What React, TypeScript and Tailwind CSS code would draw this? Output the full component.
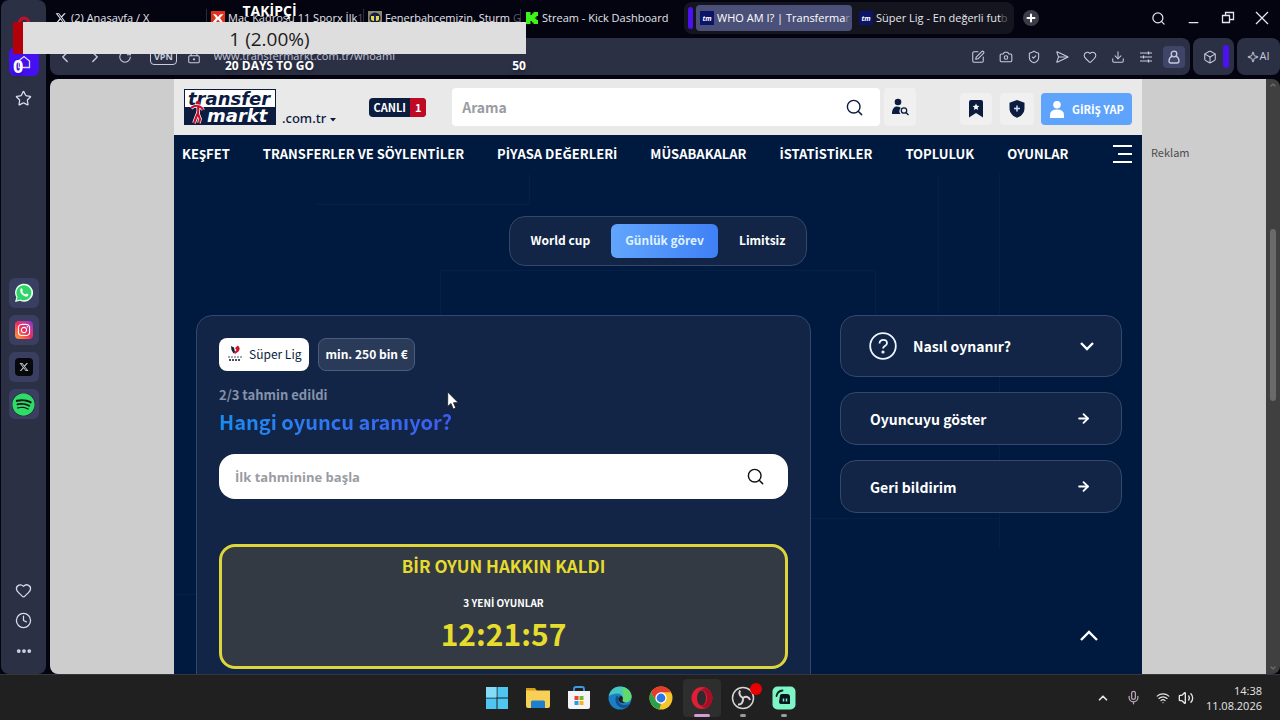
import React from 'react';
import {
  ArrowRight,
  Box,
  Camera,
  ChevronDown,
  ChevronLeft,
  ChevronRight,
  ChevronUp,
  Clock4,
  Download,
  Ellipsis,
  Heart,
  LockKeyhole,
  Mic,
  Minus,
  Plus,
  RotateCw,
  Search,
  SendHorizontal,
  ShieldCheck,
  Sparkle,
  SquarePen,
  Star,
  Volume2,
  Wifi,
} from 'lucide-react';
import { FaInstagram, FaSpotify, FaXTwitter } from 'react-icons/fa6';

const navItems = [
  'KEŞFET',
  'TRANSFERLER VE SÖYLENTİLER',
  'PİYASA DEĞERLERİ',
  'MÜSABAKALAR',
  'İSTATİSTİKLER',
  'TOPLULUK',
  'OYUNLAR',
];

// The site font has no dotted capital I, so that letter gets its own font
const TurkishText: React.FC<{ children: string }> = ({ children }) => (
  <>
    {children.split(/(İ)/).map((part, i) =>
      part === 'İ' ? <span key={i} className="font-['Open_Sans']">{part}</span> : part
    )}
  </>
);

const TmFavicon = () => (
  <span className="flex h-[14px] w-[14px] shrink-0 items-center justify-center overflow-hidden bg-[#0b1466] text-[7px] leading-none font-bold italic text-white">
    tm
  </span>
);

const SporxFavicon = () => (
  <svg viewBox="0 0 14 14" className="h-[14px] w-[14px] shrink-0">
    <rect width="14" height="14" fill="#e0301e" />
    <path d="M2 3l3 .5L7 6l2-2.500 3.500-.5L9 7l3 4.500-3-.5-2-2.500L5 11l-3.500.5L5 7z" fill="#fff" />
  </svg>
);

const FenerFavicon = () => (
  <svg viewBox="0 0 14 14" className="h-[14px] w-[14px] shrink-0">
    <rect width="14" height="14" fill="#8b8672" />
    <circle cx="7" cy="7" r="5.500" fill="#151c3d" />
    <path d="M3 5h8v3.500c-1 2-7 2-8 0z" fill="#e7d84a" />
    <path d="M6 4h2v6H6z" fill="#1a2a66" />
  </svg>
);

const KickFavicon = () => (
  <svg viewBox="0 0 12 12" className="mx-px h-3 w-3 shrink-0">
    <path d="M0 0h4.500v3H6V1.500h1.500V0H12v4h-1.500v1.500H9v1h1.500V8H12v4H7.500v-1.500H6V9H4.500v3H0z" fill="#3ef51a" />
  </svg>
);

interface TabProps {
  icon: React.ReactNode;
  title: string;
  fade?: string;
  divider?: boolean;
}

const BrowserTab: React.FC<TabProps> = ({ icon, title, fade, divider }) => (
  <button
    className={`flex h-[18px] w-[157px] items-center gap-[3px] border-r pl-1 text-left ${divider ? 'border-[#2a2c3c]' : 'border-transparent'}`}
  >
    {icon}
    <span className="whitespace-nowrap">
      {title}
      <span className="text-[#5a5c6c]">{fade}</span>
    </span>
  </button>
);

const TabBar = () => (
  <div className="flex h-[36px] items-center text-[11px] text-[#e4e5ee]">
    <BrowserTab icon={<FaXTwitter className="mx-px h-3 w-3 shrink-0" />} title="(2) Anasayfa / X" divider />
    <BrowserTab icon={<SporxFavicon />} title="Maç Kadrosu 11 Sporx İlk" fade="1" divider />
    <BrowserTab icon={<FenerFavicon />} title="Fenerbahçemizin, Sturm" fade=" G" divider />
    <BrowserTab icon={<KickFavicon />} title="Stream - Kick Dashboard" />
    <div className="ml-1.5 flex h-8 w-[330px] items-center gap-[3px] rounded-lg bg-[#14151f] px-1">
      <span className="h-[22px] w-[5px] shrink-0 rounded-sm bg-[#4a12f0]" />
      <button className="flex h-[26px] w-[156px] shrink-0 items-center gap-[3px] rounded bg-[#4b5079] px-1 text-left text-white">
        <TmFavicon />
        <span className="whitespace-nowrap">
          WHO AM I? | Transferma<span className="text-[#8c90b0]">r</span>
        </span>
      </button>
      <button className="flex h-[26px] min-w-0 flex-1 items-center gap-[3px] px-1 text-left">
        <TmFavicon />
        <span className="whitespace-nowrap">
          Süper Lig - En değerli fut<span className="text-[#5a5c6c]">b</span>
        </span>
      </button>
    </div>
    <button aria-label="Yeni sekme" className="ml-[9px] flex h-4 w-4 items-center justify-center rounded-full bg-[#3b3c48] text-white">
      <Plus className="h-3 w-3" strokeWidth={4} />
    </button>
    <div className="ml-auto flex items-center gap-5 pr-[11px]">
      <button aria-label="Sekme ara"><Search className="h-[15px] w-[15px]" /></button>
      <button aria-label="Küçült"><Minus className="mt-2 h-[15px] w-[15px]" strokeWidth={2} /></button>
      <button aria-label="Geri yükle">
        <svg viewBox="0 0 14 14" className="h-[14px] w-[14px]" fill="none" stroke="currentColor" strokeWidth="1.300">
          <path d="M1.500 4.500h7v7h-7z" />
          <path d="M4.500 4.500v-3h8v7h-4" />
        </svg>
      </button>
      <button aria-label="Kapat">
        <svg viewBox="0 0 14 14" className="h-[14px] w-[14px]" fill="none" stroke="currentColor" strokeWidth="1.300">
          <path d="M1 1l12 12M13 1L1 13" />
        </svg>
      </button>
    </div>
  </div>
);

const AddressBar = () => (
  <div className="mt-[2px] flex h-[37px] gap-[3px] text-[#c9ccdc]">
    <div className="flex min-w-0 flex-1 items-center rounded-lg bg-[#2c3045] pr-[5px] pl-[6px]">
      <div className="flex items-center">
        <button aria-label="Geri" className="w-[30px]"><ChevronLeft className="h-[18px] w-[18px]" strokeWidth={1.8} /></button>
        <button aria-label="İleri" className="w-[32px]"><ChevronRight className="h-[18px] w-[18px]" strokeWidth={1.8} /></button>
        <button aria-label="Yenile" className="w-8"><RotateCw className="h-[14px] w-[14px]" strokeWidth={1.8} /></button>
        <span className="mr-[10px] rounded-sm border border-[#c9ccdc] px-[3px] text-[9px] leading-[14px] font-bold">VPN</span>
        <LockKeyhole className="h-[14px] w-[14px]" strokeWidth={1.8} />
      </div>
      <label htmlFor="address" className="sr-only">Adres</label>
      <input
        id="address"
        readOnly
        value="www.transfermarkt.com.tr/whoami"
        className="ml-[13px] min-w-0 flex-1 bg-transparent text-[11px] text-[#c3c6d6] outline-none"
      />
      <div className="flex items-center gap-[14px]">
        <SquarePen className="h-[14px] w-[14px]" strokeWidth={1.8} />
        <Camera className="h-[14px] w-[14px]" strokeWidth={1.8} />
        <ShieldCheck className="h-[14px] w-[14px]" strokeWidth={1.8} />
        <SendHorizontal className="h-[14px] w-[14px]" strokeWidth={1.8} />
        <Heart className="h-[14px] w-[14px]" strokeWidth={1.8} />
        <Download className="h-[14px] w-[14px]" strokeWidth={1.8} />
        <svg viewBox="0 0 14 14" className="h-[14px] w-[14px]" fill="none" stroke="currentColor" strokeWidth="1.200">
          <path d="M1 3h12M1 7h12M1 11h12M9.500 1.500v3M4.500 5.500v3M9.500 9.500v3" />
        </svg>
      </div>
      <button aria-label="Profil" className="ml-[10px] flex h-[22px] w-[22px] items-center justify-center rounded bg-[#3f4568]">
        <svg viewBox="0 0 14 14" className="h-[14px] w-[14px]" fill="none" stroke="currentColor" strokeWidth="1.300">
          <circle cx="7" cy="4" r="2.800" />
          <path d="M5 6.200C2.500 7.500 2 9 2 11q0 2 2 2h6q2 0 2-2c0-2-.5-3.500-3-4.800" />
        </svg>
      </button>
    </div>
    <div className="flex w-[41px] items-center justify-end gap-[6px] rounded-lg bg-[#2c3045] pr-[5px]">
      <Box className="h-[14px] w-[14px]" strokeWidth={1.8} />
      <span className="h-[23px] w-[6px] rounded-sm bg-[#4a12f0]" />
    </div>
    <button className="flex w-[43px] items-center justify-center rounded-lg bg-[#2c3045] text-[11px]">
      <Sparkle className="h-3 w-3" strokeWidth={2} />
      AI
    </button>
  </div>
);

const tile = 'flex h-[30px] w-[30px] items-center justify-center rounded-md bg-[#3a3e60]';

const Sidebar = () => (
  <aside className="ml-px flex w-[45px] shrink-0 flex-col items-center rounded-lg bg-[#2c3045] text-[#d9dcec]">
    <div className="flex h-[47px] items-center">
      <svg viewBox="0 0 16 16" className="h-4 w-4" fill="none" stroke="#c0102c" strokeWidth="3">
        <ellipse cx="8" cy="8" rx="5" ry="6" />
      </svg>
    </div>
    <button aria-label="Çalışma alanı" className="flex h-[29px] w-[30px] items-center justify-center rounded-md bg-[#4310f2]">
      <svg viewBox="0 0 14 14" className="h-[14px] w-[14px]" fill="none" stroke="currentColor" strokeWidth="1.300">
        <path d="M1.500 6L7 1.500 12.500 6v6.500h-11z" />
      </svg>
    </button>
    <Star className="mt-[14px] h-[17px] w-[17px]" strokeWidth={1.8} />
    <div className="mt-[171px] flex flex-col gap-[7px]">
      <button aria-label="WhatsApp" className={tile}>
        <svg viewBox="0 0 20 20" className="h-5 w-5">
          <path d="M1 19l1.300-4.800A9 9 0 1 1 6 17.700z" fill="#e9fff0" />
          <path d="M2.700 17.300l.9-3.400A7.500 7.500 0 1 1 6.300 16.400z" fill="#2fd566" />
          <path d="M6.700 5.500c.6-.6 1.200-.4 1.500.3l.6 1.400c.2.600-.7 1-.5 1.500.6 1.200 1.600 2.100 2.900 2.600.5.100.8-.8 1.300-.8l1.600.8c.6.300.3 1.300-.2 1.800-2.700 2.200-9.500-3.300-7.200-7.600z" fill="#fff" />
        </svg>
      </button>
      <button aria-label="Instagram" className={tile}>
        <span className="flex h-[18px] w-[18px] items-center justify-center rounded bg-linear-to-tr from-[#ff9d1f] via-[#f0245c] to-[#8a22d6] text-white">
          <FaInstagram className="h-[14px] w-[14px]" />
        </span>
      </button>
      <button aria-label="X" className={tile}>
        <span className="flex h-[18px] w-[18px] items-center justify-center rounded bg-[#07080c] text-[#cfd0d6]">
          <FaXTwitter className="h-[10px] w-[10px]" />
        </span>
      </button>
      <button aria-label="Spotify" className={tile}>
        <span className="rounded-full bg-[#101815]"><FaSpotify className="h-[23px] w-[23px] text-[#2fdb69]" /></span>
      </button>
    </div>
    <div className="mt-auto flex flex-col items-center gap-[13px] pb-[14px]">
      <Heart className="h-[17px] w-[17px]" strokeWidth={1.8} />
      <Clock4 className="h-[17px] w-[17px]" strokeWidth={1.8} />
      <Ellipsis className="h-[18px] w-[18px]" strokeWidth={3} />
    </div>
  </aside>
);

const SiteLogo = () => (
  <a href="#" className="relative block h-[36px] w-[92px] border border-[#0b1c3f] bg-white font-['DejaVu_Sans'] text-[18px] leading-[17px] font-bold italic">
    <span className="block h-[17px] pl-[3px] text-[#0b1c3f]">transfer</span>
    <span className="block h-[17px] bg-[#0b1c3f] pl-[22px] text-white">markt</span>
    <svg viewBox="0 0 16 24" className="absolute bottom-0 left-1 h-6 w-4" fill="none" stroke="#c8102e" strokeWidth="2.200">
      <circle cx="9" cy="3" r="1.200" />
      <path d="M2 8q4-3 7-2 4 1 5 4M9 6q1 6-1 9l-3 8M9 14l2 5-1 4" stroke="#fff" strokeWidth="3.600" />
      <path d="M2 8q4-3 7-2 4 1 5 4M9 6q1 6-1 9l-3 8M9 14l2 5-1 4" />
    </svg>
  </a>
);

const SiteHeader = () => (
  <header className="flex h-14 shrink-0 items-center bg-[#e9e9e9] px-[10px]">
    <SiteLogo />
    <button className="mt-[22px] ml-[6px] flex items-center gap-1 font-['Noto_Sans'] text-[13px] leading-4 font-medium text-[#0b1c3f]">
      .com.tr
      <svg viewBox="0 0 6 4" className="mt-1 h-1 w-[6px]"><path d="M0 0h6L3 3.500z" fill="#0b1c3f" /></svg>
    </button>
    <a href="#" className="ml-[33px] flex h-[19px] overflow-hidden rounded-sm bg-[#0b1c3f] text-[11px] leading-[18px] font-bold text-white">
      <span className="w-[41px] text-center">CANLI</span>
      <span className="w-4 bg-[#bf0a24] text-center">1</span>
    </a>
    <form className="ml-[26px] flex h-[38px] min-w-0 flex-1 items-center rounded bg-white pr-4 pl-[10px]">
      <label htmlFor="site-search" className="sr-only">Arama</label>
      <input
        id="site-search"
        placeholder="Arama"
        className="min-w-0 flex-1 text-[14px] leading-5 font-bold outline-none placeholder:text-[#9a9ca3]"
      />
      <Search className="h-[19px] w-[19px] text-[#0b1c3f]" strokeWidth={1.8} />
    </form>
    <button aria-label="Detaylı arama" className="ml-1 flex h-[38px] w-8 items-center justify-center rounded bg-[#f0f0f1]">
      <svg viewBox="0 0 18 18" className="h-[18px] w-[18px]" fill="#0b1c3f">
        <circle cx="7" cy="4" r="3.300" />
        <path d="M1 16c0-5 2-7.500 5-7.500q3 0 3.800 1.500A4.500 4.500 0 0 0 9.500 16z" />
        <circle cx="13" cy="12.500" r="2.700" fill="none" stroke="#0b1c3f" strokeWidth="1.300" />
        <path d="M15 14.500l2.500 2.500" stroke="#0b1c3f" strokeWidth="1.400" />
      </svg>
    </button>
    <button aria-label="İzleme listesi" className="mt-1 ml-11 flex h-8 w-8 items-center justify-center rounded bg-[#f0f0f1]">
      <svg viewBox="0 0 14 18" className="h-[18px] w-[14px]" fill="#0b1c3f">
        <path d="M0 2q0-2 2-2h10q2 0 2 2v15.500L7 13l-7 4.500z" />
        <path d="M7 3.500l1 2.200 2.400.3-1.800 1.600.5 2.400L7 8.800 4.900 10l.5-2.400L3.600 6 6 5.700z" fill="#fff" />
      </svg>
    </button>
    <button aria-label="Koruma" className="mt-1 ml-2 flex h-8 w-[34px] items-center justify-center rounded bg-[#f0f0f1]">
      <svg viewBox="0 0 16 18" className="h-[18px] w-4" fill="#0b1c3f">
        <path d="M8 0l7.500 2.700V8c0 5-3 8-7.500 9.700C3.500 16 .5 13 .5 8V2.700z" />
        <path d="M8 5.500v6M5 8.500h6" stroke="#cfe0ff" strokeWidth="1.500" />
      </svg>
    </button>
    <button className="mt-1 ml-[7px] flex h-8 w-[91px] items-center gap-2 rounded bg-[#5ea4fc] pl-[9px] text-[11px] leading-4 font-bold whitespace-nowrap text-white">
      <svg viewBox="0 0 14 17" className="h-[17px] w-[14px]" fill="#fff">
        <circle cx="7" cy="3.800" r="3.800" />
        <path d="M0 17v-3q0-5.500 7-5.500t7 5.500v3z" />
      </svg>
      <span><TurkishText>GİRİŞ YAP</TurkishText></span>
    </button>
  </header>
);

const glass = 'border border-[#33486b] bg-[#122546]';

// Hairlines behind the game, barely lighter than the page
const BackgroundLines = () => (
  <svg viewBox="0 0 968 595" className="absolute top-0 left-0 w-full" fill="none" stroke="#061f45" strokeWidth="1">
    <path d="M355.500 95v30M142 125.500h214M266.500 192v48M266 191.500h436M701.500 192v48M764.500 95v140M825.500 95v375M540 439.500h285M0 515.500h40" />
  </svg>
);

const ModeTabs = () => (
  <div className={`relative mx-auto mt-11 flex w-fit gap-[7px] rounded-2xl p-[7px] text-[12px] leading-4 font-bold ${glass}`}>
    <button className="h-[34px] px-[14px] pb-[2px]">World cup</button>
    <button className="h-[34px] rounded-md bg-linear-to-r from-[#62a5fc] to-[#3f80f6] px-[14px] pb-[2px] text-[#dff3ff]">Günlük görev</button>
    <button className="h-[34px] px-[14px] pb-[2px]">Limitsiz</button>
  </div>
);

const GameCard = () => (
  <section className={`min-w-0 flex-1 rounded-2xl px-[22px] pt-[22px] pb-10 ${glass}`}>
    <div className="flex gap-[9px]">
      <span className="flex h-[33px] items-center gap-[6px] rounded-lg bg-white px-2 pb-[2px] text-[12px] text-[#0b1c3f]">
        <svg viewBox="0 0 16 18" className="h-[18px] w-4">
          <path d="M4 1l3 1.500L8 7 6.500 8.500 4.500 5z" fill="#1a1f38" />
          <path d="M11 .5q3 3 .5 6L8 9 7 7.500 9.500 5 8 3z" fill="#d0142c" />
          <path d="M1 12h14" stroke="#8a8a92" strokeWidth="1.500" strokeDasharray="2 1" />
          <path d="M2 15h12" stroke="#4a4d5e" strokeWidth="2" strokeDasharray="2 1" />
        </svg>
        Süper Lig
      </span>
      <span className="flex h-[33px] items-center rounded-lg border border-[#4b5d7c] bg-[#2a3b5a] px-[6px] pb-[2px] text-[12px] font-bold">min. 250 bin €</span>
    </div>
    <p className="mt-[14px] text-[13px] leading-5 font-bold text-[#8592ac]">2/3 tahmin edildi</p>
    <h1 className="mt-[3px] w-fit bg-linear-to-r from-[#1a8cf0] to-[#3c5cf0] bg-clip-text text-[20px] leading-7 font-bold text-transparent">
      Hangi oyuncu aranıyor?
    </h1>
    <form className="mt-[18px] flex h-[45px] items-center rounded-2xl bg-white pr-[23px] pl-4">
      <label htmlFor="guess" className="sr-only">İlk tahminine başla</label>
      <input
        id="guess"
        placeholder="İlk tahminine başla"
        className="min-w-0 flex-1 font-['Open_Sans'] text-[13px] leading-5 font-bold outline-none placeholder:text-[#9a9ca3]"
      />
      <Search className="h-[19px] w-[19px] text-[#111]" strokeWidth={1.8} />
    </form>
    <div className="mt-[45px] flex h-[125px] flex-col items-center rounded-2xl border-[3px] border-[#dcd63c] bg-[#333a44] pt-[7px] font-bold text-[#e6dc2e]">
      <p className="text-[17px] leading-6"><TurkishText>BİR OYUN HAKKIN KALDI</TurkishText></p>
      <p className="mt-4 text-[10px] leading-4 text-white"><TurkishText>3 YENİ OYUNLAR</TurkishText></p>
      <p className="mt-[2px] text-[30px] leading-10">12:21:57</p>
    </div>
  </section>
);

const SideActions = () => (
  <div className="flex w-[282px] shrink-0 flex-col gap-[15px] text-[14px] leading-5 font-bold">
    <button className={`flex h-[62px] items-center rounded-2xl pr-[27px] pl-7 ${glass}`}>
      <svg viewBox="0 0 28 28" className="mr-4 h-7 w-7" fill="none" stroke="#eef6ff" strokeWidth="1.800">
        <circle cx="14" cy="14" r="12.800" />
        <path d="M10.500 11.500c0-5 7.500-4.500 7.500-.3 0 2.800-4 2.800-4 5.300" />
        <circle cx="14" cy="20" r=".7" fill="#eef6ff" />
      </svg>
      Nasıl oynanır?
      <svg viewBox="0 0 14 14" className="ml-auto h-[14px] w-[14px]" fill="none" stroke="#fff" strokeWidth="2.400">
        <path d="M1 4l6 6 6-6" />
      </svg>
    </button>
    <button className={`flex h-[53px] items-center justify-between rounded-2xl pr-[30px] pl-[29px] ${glass}`}>
      Oyuncuyu göster
      <ArrowRight className="h-[15px] w-[15px]" strokeWidth={3} />
    </button>
    <button className={`flex h-[53px] items-center justify-between rounded-2xl pr-[30px] pl-[29px] ${glass}`}>
      Geri bildirim
      <ArrowRight className="h-[15px] w-[15px]" strokeWidth={3} />
    </button>
  </div>
);

const Site = () => (
  <div className="relative flex min-w-0 flex-col overflow-hidden bg-[#00193e] text-white">
    <BackgroundLines />
    <div className="relative"><SiteHeader /></div>
    <nav className="relative flex h-[37px] shrink-0 items-center gap-[33px] pr-[10px] pl-2 text-[13px] leading-5 font-bold whitespace-nowrap">
      {navItems.map((item) => (
        <a key={item} href="#"><TurkishText>{item}</TurkishText></a>
      ))}
      <button aria-label="Menü" className="ml-auto flex flex-col items-end gap-[6px]">
        <span className="h-[2px] w-[19px] bg-white" />
        <span className="h-[2px] w-[14px] bg-white" />
        <span className="h-[2px] w-[19px] bg-white" />
      </button>
    </nav>
    <ModeTabs />
    <div className="relative mt-[49px] flex items-start gap-[29px] pr-5 pl-[22px]">
      <GameCard />
      <SideActions />
    </div>
    <button aria-label="Yukarı çık" className="absolute right-11 bottom-[30px]">
      <svg viewBox="0 0 18 16" className="h-4 w-[18px]" fill="none" stroke="#fff" strokeWidth="2.400">
        <path d="M1 12l8-8 8 8" />
      </svg>
    </button>
  </div>
);

const PageView = () => (
  <div className="mt-1 flex min-h-0 flex-1 overflow-hidden rounded-lg">
    <main className="grid min-w-0 flex-1 grid-cols-[1fr_minmax(0,968px)_1fr] overflow-hidden bg-[#cdcdcd] font-['Noto_Sans_CJK_SC','Open_Sans',sans-serif]">
      <div />
      <Site />
      <p className="pt-16 pl-[9px] text-[11px] leading-[18px] text-[#4c4c4c]">Reklam</p>
    </main>
    <div className="flex w-[14px] flex-col items-center justify-between bg-[#404040] py-[2px] text-[#6b6b6b]">
      <ChevronUp className="h-2 w-2" strokeWidth={4} />
      <span className="mt-[140px] mb-auto h-[172px] w-[6px] rounded-full bg-[#6a6a6a]" />
      <ChevronDown className="h-2 w-2" strokeWidth={4} />
    </div>
  </div>
);

const WindowsIcon = () => (
  <svg viewBox="0 0 24 24" className="h-6 w-6">
    <path d="M1 1h10.500v10.500H1zM12.500 1H23v10.500H12.500zM1 12.500h10.500V23H1zM12.500 12.500H23V23H12.500z" fill="#4fc6f2" />
    <path d="M1 1h10.500v10.500H1z" fill="#85dcf8" />
  </svg>
);

const FolderIcon = () => (
  <svg viewBox="0 0 24 24" className="h-6 w-6">
    <path d="M0 2h9l2 3H0z" fill="#d99a17" />
    <path d="M0 4.500h24V20q0 2-2 2H2q-2 0-2-2z" fill="#f8d055" />
    <path d="M5 22v-6q0-1.500 1.500-1.500h11q1.500 0 1.500 1.500v6z" fill="#1d7fd0" />
  </svg>
);

const StoreIcon = () => (
  <svg viewBox="0 0 24 24" className="h-6 w-6">
    <path d="M7 7V3q0-2 2-2h6q2 0 2 2v4" fill="none" stroke="#3a9be0" strokeWidth="1.800" />
    <path d="M1 5h22v16q0 2-2 2H3q-2 0-2-2z" fill="#f4f4f6" />
    <path d="M7.500 10h4v4h-4z" fill="#e8452c" />
    <path d="M12.500 10h4v4h-4z" fill="#79b72a" />
    <path d="M7.500 15h4v4h-4z" fill="#2a9be8" />
    <path d="M12.500 15h4v4h-4z" fill="#f5b51d" />
  </svg>
);

const EdgeIcon = () => (
  <svg viewBox="0 0 24 24" className="h-6 w-6">
    <circle cx="12" cy="12" r="11.500" fill="#1b7fc4" />
    <path d="M.8 10C2.500 3.500 7 .5 12 .5c7 0 11.500 5 11.500 9.800 0 4-3 6-6 6-3.500 0-3.500-1.500-3-2.500 1-3-1-6.300-5-6.300-4 0-7 1.500-8.700 2.500z" fill="#45c8c0" />
    <path d="M14 1c6 1 9.500 5.500 9.500 9.300 0 4-3 6-6 6-3.500 0-3.500-1.500-3-2.500C16 9 15 4 14 1z" fill="#62d96c" />
    <path d="M9 9.500c-3 3-2 11 6 12.500 3 0 5-1.500 7-4-8 3-13-1-11-6z" fill="#12508f" />
    <path d="M11.500 10.500q2-1 3 .5t0 3q0 2 3 2.500-5 1.500-6.500-1.500-1-2.500.5-4.500z" fill="#202023" />
  </svg>
);

const ChromeIcon = () => (
  <svg viewBox="0 0 24 24" className="h-6 w-6">
    <circle cx="12" cy="12" r="11.500" fill="#f7c52a" />
    <path d="M2 6.300A11.500 11.500 0 0 1 22 6.300H12L7 14.900z" fill="#e33b2e" />
    <path d="M2 6.300L7 14.900 12 17.700 10.300 23.400A11.500 11.500 0 0 1 2 6.300z" fill="#2b9f4b" />
    <circle cx="12" cy="12" r="5.700" fill="#fff" />
    <circle cx="12" cy="12" r="4.400" fill="#2d76e8" />
  </svg>
);

const OperaIcon = () => (
  <svg viewBox="0 0 24 24" className="h-6 w-6">
    <ellipse cx="12" cy="12" rx="10.500" ry="11" fill="#e01e35" />
    <path d="M16 2a11 11 0 0 1 0 20q-3 0-5-2c8 0 8-16 0-16q2-2 5-2z" fill="#a50f24" />
    <ellipse cx="11.500" cy="12" rx="4.500" ry="7.500" fill="#2d2b2e" />
  </svg>
);

const ObsIcon = () => (
  <svg viewBox="0 0 24 24" className="h-6 w-6">
    <circle cx="12" cy="12" r="10.500" fill="#232225" stroke="#d5d5d8" strokeWidth="1.500" />
    <path d="M9 4.500c-1.500 3 0 6 3 7.500M19 14c-1-3.500-4-4-7-2M7 18.500c3.500.5 5.500-2.500 5-6.500" fill="none" stroke="#d5d5d8" strokeWidth="2" />
  </svg>
);

const StreamIcon = () => (
  <svg viewBox="0 0 24 24" className="h-6 w-6">
    <rect x=".5" y=".5" width="23" height="23" rx="5" fill="#7df5c4" />
    <path d="M4.500 10q1-5 6-5.500" fill="none" stroke="#09251d" strokeWidth="1.800" strokeLinecap="round" />
    <path d="M8 9.500Q8 8 10 8h5q3 0 3 3v7H9q-2 0-2-2z" fill="#09161c" />
    <path d="M11.500 12.500v3M14.500 12.500v3" stroke="#7df5c4" strokeWidth="1.500" />
  </svg>
);

const apps = [
  { name: 'Başlat', icon: <WindowsIcon /> },
  { name: 'Dosya Gezgini', icon: <FolderIcon /> },
  { name: 'Store', icon: <StoreIcon /> },
  { name: 'Edge', icon: <EdgeIcon /> },
  { name: 'Chrome', icon: <ChromeIcon /> },
  { name: 'Opera', icon: <OperaIcon />, active: true },
  { name: 'OBS', icon: <ObsIcon />, running: true, recording: true },
  { name: 'Streamlabs', icon: <StreamIcon />, running: true },
];

const Taskbar = () => (
  <footer className="grid h-[46px] shrink-0 grid-cols-[1fr_auto_1fr] items-center border-t border-[#35363c] bg-[#202020] text-[#e6e6e6]">
    <div />
    <div className="flex gap-[3px]">
      {apps.map((app) => (
        <button
          key={app.name}
          aria-label={app.name}
          className={`relative flex h-[38px] w-[38px] items-center justify-center rounded ${app.active ? 'bg-[#2e2e2f]' : ''}`}
        >
          {app.icon}
          {app.recording && <span className="absolute top-1 right-0 h-3 w-3 rounded-full bg-[#e90000]" />}
          {app.active && <span className="absolute bottom-0 h-[3px] w-4 rounded-full bg-[#d79ad8]" />}
          {app.running && <span className="absolute bottom-0 h-[3px] w-[6px] rounded-full bg-[#9a9a9a]" />}
        </button>
      ))}
    </div>
    <div className="flex items-center justify-end pr-[18px]">
      <ChevronUp className="mr-4 h-[14px] w-[14px]" strokeWidth={3} />
      <Mic className="mr-[15px] h-[15px] w-[15px] text-[#b9a5b9]" />
      <Wifi className="mr-2 h-[14px] w-[14px]" />
      <Volume2 className="h-4 w-4" />
      <div className="ml-3 text-right text-[11px] leading-[15px]">
        <p>14:38</p>
        <p>11.08.2026</p>
      </div>
    </div>
  </footer>
);

// Follower goal widget that floats over the top left of the desktop
const GoalOverlay = () => (
  <div className="pointer-events-none absolute top-0 left-[13px] w-[513px] font-['Open_Sans',sans-serif] text-white">
    <p className="h-[22px] text-center text-[14px] leading-[22px] font-bold text-shadow-lg">TAKİPÇİ</p>
    <div className="flex h-8 bg-linear-to-r from-[#b3000b] from-2% to-[#dedede] to-2%">
      <p className="flex-1 text-center text-[19px] leading-[34px] text-[#1c1c1c]">1 (2.00%)</p>
    </div>
    <div className="flex h-6 items-center justify-between text-[12px] leading-6 font-bold text-shadow-lg">
      <span className="w-8 text-[18px]">0</span>
      <span>20 DAYS TO GO</span>
      <span className="w-8 text-right">50</span>
    </div>
  </div>
);

const MousePointer = () => (
  <svg viewBox="0 0 12 19" className="pointer-events-none absolute top-[391px] left-[447px] h-[19px] w-3">
    <path d="M.7 1v14.500l3.300-3 2.200 5.500 2.600-1-2.300-5.300h4.800z" fill="#fff" stroke="#1a1a1a" strokeWidth=".8" />
  </svg>
);

export default function App() {
  return (
    <div className="relative flex h-screen flex-col overflow-hidden bg-[#03040f] font-['Open_Sans',sans-serif]">
      <div className="flex min-h-0 flex-1 gap-1">
        <Sidebar />
        <div className="flex min-w-0 flex-1 flex-col">
          <TabBar />
          <AddressBar />
          <PageView />
        </div>
      </div>
      <Taskbar />
      <GoalOverlay />
      <MousePointer />
    </div>
  );
}
